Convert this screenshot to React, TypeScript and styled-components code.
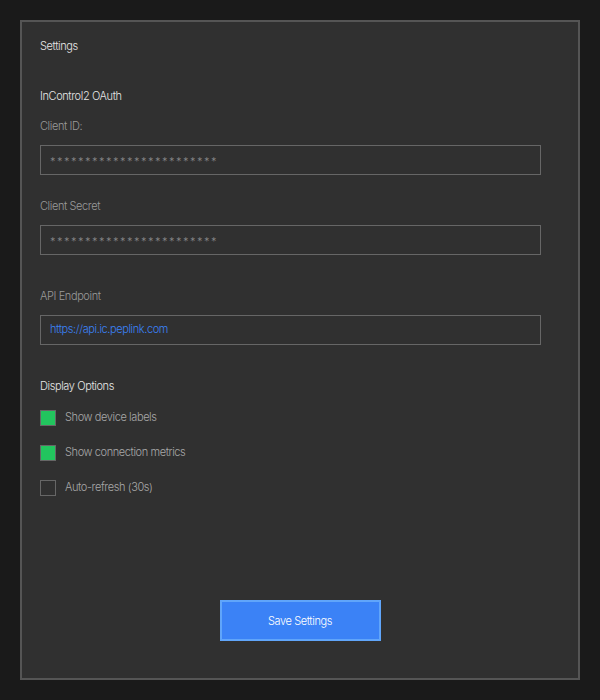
import styled, { createGlobalStyle } from 'styled-components';

const GlobalStyle = createGlobalStyle`
  html, body {
    margin: 0;
    padding: 0;
    background: #1a1a1a;
    font-family: Inter, 'Noto Sans', sans-serif;
  }
  * {
    box-sizing: border-box;
  }
`;

const Page = styled.div`
  height: 700px;
  padding: 20px;
`;

const Panel = styled.div`
  height: 100%;
  border: 2px solid #555;
  background: #303030;
  padding: 18px;
  display: flex;
  flex-direction: column;
  font-weight: 300;
  letter-spacing: -0.4px;
`;

const Title = styled.h1`
  margin: 0;
  font-size: 11px;
  line-height: 12px;
  font-weight: 300;
  color: #e6e6e6;
`;

const Section = styled.section<{ $top: number }>`
  margin-top: ${(p) => p.$top}px;
  display: flex;
  flex-direction: column;
`;

const SectionTitle = styled.h2`
  margin: 0 0 18px;
  font-size: 11px;
  line-height: 12px;
  font-weight: 300;
  color: #e6e6e6;
`;

const Field = styled.div<{ $extra?: boolean }>`
  display: flex;
  flex-direction: column;
  margin-top: ${(p) => (p.$extra ? '10px' : '0')};
  margin-bottom: 25px;
  &:last-child {
    margin-bottom: 0;
  }
`;

const Label = styled.label`
  font-size: 11px;
  line-height: 12px;
  color: #9a9a9a;
  margin-bottom: 13px;
`;

const Input = styled.input<{ $link?: boolean }>`
  width: 501px;
  height: 30px;
  padding: ${(p) => (p.$link ? '0 0 2px 9px' : '4px 0 0 9px')};
  border: 1px solid #666;
  background: transparent;
  font-family: inherit;
  font-weight: 300;
  font-size: 11px;
  color: ${(p) => (p.$link ? '#3b82f6' : '#8a8a8a')};
  letter-spacing: ${(p) => (p.$link ? '-0.4px' : '1.5px')};
  outline: none;
`;

const Options = styled.div`
  display: flex;
  flex-direction: column;
  gap: 19px;
`;

const Option = styled.label`
  display: flex;
  align-items: center;
  gap: 9px;
  font-size: 11px;
  line-height: 16px;
  color: #a8a8a8;
`;

const OptionText = styled.span`
  position: relative;
  top: -1px;
`;

const Box = styled.span<{ $checked: boolean }>`
  width: 16px;
  height: 16px;
  border: 1px solid #666;
  background: ${(p) => (p.$checked ? '#22c55e' : 'transparent')};
`;

const SaveButton = styled.button`
  margin: auto auto 19px;
  width: 161px;
  height: 41px;
  padding-top: 2px;
  background: #3b82f6;
  border: 2px solid #60a5fa;
  color: #fff;
  font-family: inherit;
  font-weight: 300;
  letter-spacing: -0.4px;
  font-size: 11px;
  cursor: pointer;
`;

const stars = '*'.repeat(24);

const options = [
  { label: 'Show device labels', checked: true },
  { label: 'Show connection metrics', checked: true },
  { label: 'Auto-refresh (30s)', checked: false },
];

export default function App() {
  return (
    <>
      <GlobalStyle />
      <Page>
        <Panel>
          <Title>Settings</Title>

          <Section $top={38}>
            <SectionTitle>InControl2 OAuth</SectionTitle>
            <Field>
              <Label>Client ID:</Label>
              <Input readOnly value={stars} />
            </Field>
            <Field>
              <Label>Client Secret</Label>
              <Input readOnly value={stars} />
            </Field>
            <Field $extra>
              <Label>API Endpoint</Label>
              <Input $link readOnly value="https://api.ic.peplink.com" />
            </Field>
          </Section>

          <Section $top={35}>
            <SectionTitle>Display Options</SectionTitle>
            <Options>
              {options.map((o) => (
                <Option key={o.label}>
                  <Box $checked={o.checked} />
                  <OptionText>{o.label}</OptionText>
                </Option>
              ))}
            </Options>
          </Section>

          <SaveButton>Save Settings</SaveButton>
        </Panel>
      </Page>
    </>
  );
}
